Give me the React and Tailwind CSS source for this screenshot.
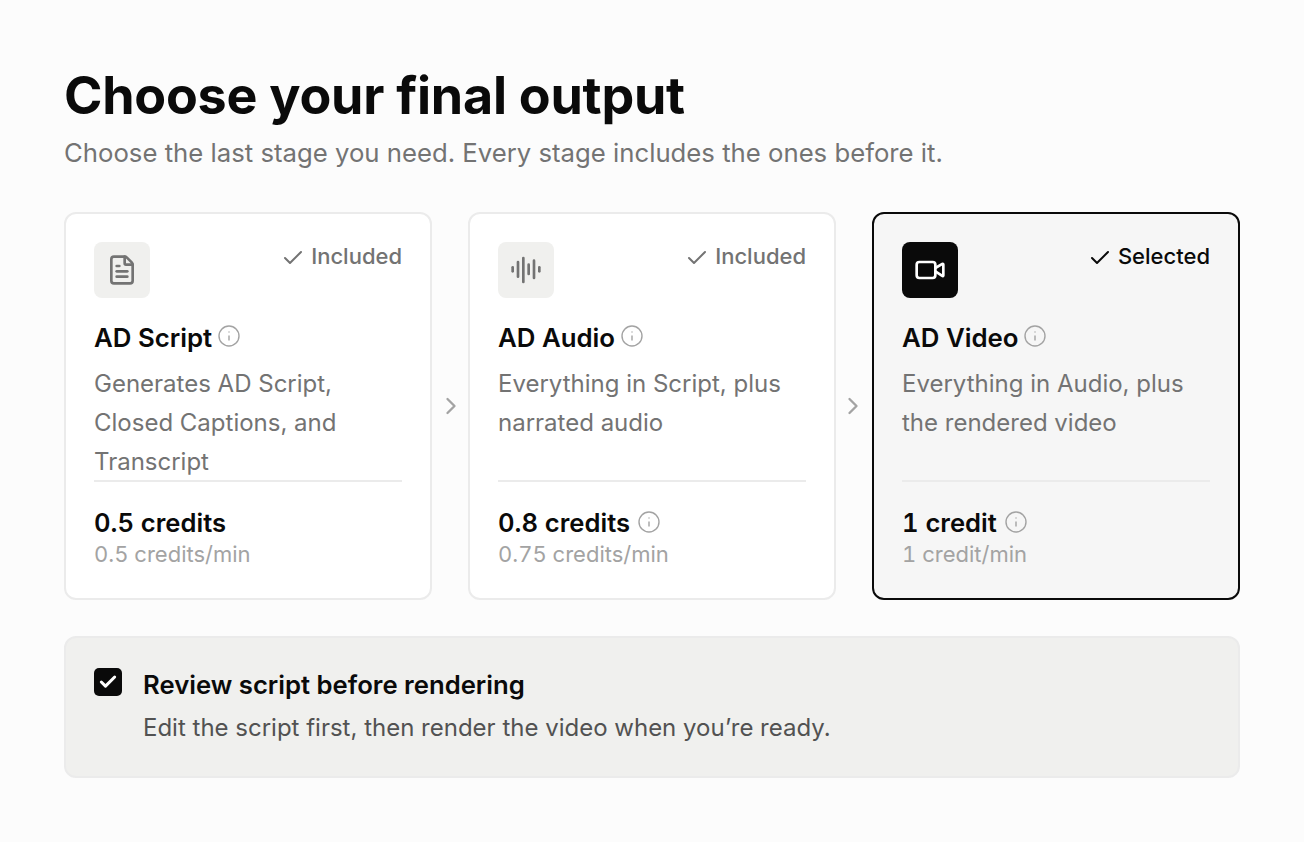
import React from 'react';
import { AudioLines, Check, ChevronRight, FileText, Info, Video } from 'lucide-react';

const stages = [
  {
    name: 'AD Script',
    Icon: FileText,
    desc: ['Generates AD Script,', 'Closed Captions, and', 'Transcript'],
    credits: '0.5 credits',
    rate: '0.5 credits/min',
    noCreditInfo: true,
  },
  {
    name: 'AD Audio',
    Icon: AudioLines,
    desc: ['Everything in Script, plus', 'narrated audio'],
    credits: '0.8 credits',
    rate: '0.75 credits/min',
  },
  {
    name: 'AD Video',
    Icon: Video,
    desc: ['Everything in Audio, plus', 'the rendered video'],
    credits: '1 credit',
    rate: '1 credit/min',
    selected: true,
  },
];

function StageCard({ stage }) {
  const { name, Icon, desc, credits, rate, selected, noCreditInfo } = stage;
  return (
    <div
      className={
        'w-[368px] h-[388px] shrink-0 rounded-[12px] border-2 px-[28px] pt-[28px] flex flex-col ' +
        (selected ? 'border-[#0a0a0a] bg-[#f6f6f6]' : 'border-[#ebebeb] bg-white')
      }
    >
      <div className="flex justify-between items-start h-[56px]">
        <div
          className={
            'w-[56px] h-[56px] rounded-[8px] flex items-center justify-center ' +
            (selected ? 'bg-[#0a0a0a] text-white' : 'bg-[#f0f0ee] text-[#737373]')
          }
        >
          <Icon size={32} strokeWidth={2} />
        </div>
        <div
          className={
            'flex items-center gap-[6px] text-[22px] leading-[26px] font-medium ' +
            (selected ? 'text-[#0a0a0a]' : 'text-[#737373]')
          }
        >
          <Check size={24} strokeWidth={2} className="mt-[4px]" />
          <span>{selected ? 'Selected' : 'Included'}</span>
        </div>
      </div>
      <div className="flex items-center gap-[5px] mt-[21px] h-[38px]">
        <span className="text-[25.8px] font-semibold text-[#0a0a0a]">{name}</span>
        <Info size={24} strokeWidth={1.4} className="text-[#a3a3a3] -mt-[4px]" />
      </div>
      <div className="mt-[7px] h-[116px] text-[24px] leading-[39px] text-[#737373]">
        {desc.map((line) => (
          <div key={line}>{line}</div>
        ))}
      </div>
      <div className="h-[2px] bg-[#ebebeb]" />
      <div className="flex items-center gap-[7px] mt-[25px] h-[32px]">
        <span className="text-[25.6px] font-semibold text-[#0a0a0a] tabular-nums">{credits}</span>
        {!noCreditInfo && <Info size={24} strokeWidth={1.4} className="text-[#a3a3a3] -mt-[2px]" />}
      </div>
      <div className="text-[22px] leading-[30px] text-[#a3a3a3] tabular-nums">{rate}</div>
    </div>
  );
}

export default function App() {
  return (
    <div
      className="w-[1304px] h-[842px] bg-[#fcfcfc] px-[64px] pt-[65px] overflow-hidden"
      style={{ fontFamily: 'Inter, sans-serif' }}
    >
      <h1 className="text-[52px] leading-[62px] font-bold text-[#0a0a0a] tracking-[-0.25px]">
        Choose your final output
      </h1>
      <p className="mt-[8px] text-[25.72px] leading-[36px] text-[#737373]">
        Choose the last stage you need. Every stage includes the ones before it.
      </p>
      <div className="flex items-center mt-[41px]">
        {stages.map((stage, i) => (
          <React.Fragment key={stage.name}>
            {i > 0 && (
              <div
                className={
                  'w-[36px] flex justify-center text-[#a3a3a3] ' +
                  (i === 1 ? 'pl-[2px]' : 'pr-[2px]')
                }
              >
                <ChevronRight size={28} strokeWidth={2} />
              </div>
            )}
            <StageCard stage={stage} />
          </React.Fragment>
        ))}
      </div>
      <div className="mt-[36px] w-[1176px] h-[142px] rounded-[12px] border-2 border-[#ebebeb] bg-[#f0f0ee] pl-[28px] pt-[30px] flex gap-[21px]">
        <div className="w-[28px] h-[28px] rounded-[5px] bg-[#0a0a0a] text-white flex items-center justify-center">
          <Check size={20} strokeWidth={3.6} />
        </div>
        <div className="-mt-[1px]">
          <div className="text-[25.7px] leading-[36px] font-semibold text-[#0a0a0a]">
            Review script before rendering
          </div>
          <div className="mt-[7px] text-[24px] leading-[36px] text-[#525252]">
            Edit the script first, then render the video when you’re ready.
          </div>
        </div>
      </div>
    </div>
  );
}
